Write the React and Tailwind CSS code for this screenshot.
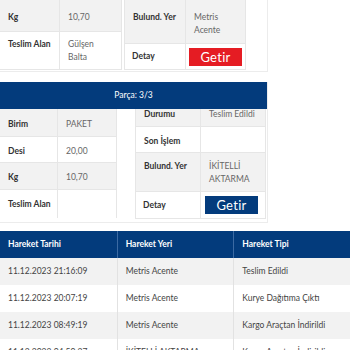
import React from 'react';

const navy = 'bg-[#033b7c]';

// one label/value row of a part detail table; cells sit at the top like td's
const Row = ({ label, children, gray, h, lw, vw, pt = 'pt-[8px]' }) => (
  <div className={`flex ${h} ${gray ? 'bg-[#f2f2f2]' : 'bg-white'} border-b border-[#e6e6e6] last:border-b-0`}>
    <div className={`${lw} shrink-0 ${pt} pl-[8px] pr-1 font-bold text-[#333] leading-[13px] border-r border-[#e6e6e6]`}>
      {label}
    </div>
    <div className={`${vw} shrink-0 ${pt} pl-[8px] pr-1 text-[#666] leading-[13px]`}>
      {children}
    </div>
  </div>
);

const Button = ({ color, children }) => (
  <div className={`w-[53px] h-[18px] ${color} text-white text-[13px] leading-[18px] text-center tracking-[0.3px]`}>
    {children}
  </div>
);

const moves = [
  ['11.12.2023 21:16:09', 'Metris Acente', 'Teslim Edildi'],
  ['11.12.2023 20:07:19', 'Metris Acente', 'Kurye Dağıtıma Çıktı'],
  ['11.12.2023 08:49:19', 'Metris Acente', 'Kargo Araçtan İndirildi'],
  ['11.12.2023 04:50:27', 'İKİTELLİ AKTARMA', 'Kargo Araçtan İndirildi'],
];

export default function App() {
  return (
    <div className="w-[350px] h-[350px] overflow-hidden bg-white text-[8.5px] font-['Lato','Noto_Sans',sans-serif]">
      {/* tail of the previous part card */}
      <div className="w-[268px] h-[72px] flex gap-[2px] border-b border-r border-[#ececec]">
        <div className="w-[122px] self-start border-r border-b border-[#e6e6e6]">
          <Row label="Kg" gray h="h-[32px]" lw="w-[60px]" vw="w-[62px]" pt="pt-[11px]">10,70</Row>
          <Row label="Teslim Alan" h="h-[37px]" lw="w-[60px]" vw="w-[62px]" pt="pt-[6px]">
            <span>Gülşen<br />Balta</span>
          </Row>
        </div>
        <div className="w-[122px] self-start border-x border-b border-[#e6e6e6]">
          <Row label="Bulund. Yer" gray h="h-[44px]" lw="w-[61px]" vw="w-[61px]" pt="pt-[11px]">
            <span>Metris<br />Acente</span>
          </Row>
          <div className="flex h-[25px] bg-white">
            <div className="w-[61px] flex items-center pl-[7px] font-bold text-[#333] border-r border-[#e6e6e6]">Detay</div>
            <div className="flex items-center pl-[3px]">
              <Button color="bg-[#e51c23]">Getir</Button>
            </div>
          </div>
        </div>
      </div>

      {/* part 3/3 */}
      <div className="w-[268px] mt-[10px] border-b border-r border-[#ececec] pb-[3px]">
        <div className={`relative z-10 h-[27px] ${navy} text-white flex items-center justify-center`}>
          Parça: 3/3
        </div>
        <div className="flex">
          <div className="w-[117px] self-start border-r border-[#e6e6e6]">
            <Row label="Birim" gray h="h-[28px]" lw="w-[58px]" vw="w-[59px]" pt="pt-[9px]">PAKET</Row>
            <Row label="Desi" h="h-[26px]" lw="w-[58px]" vw="w-[59px]">20,00</Row>
            <Row label="Kg" gray h="h-[27px]" lw="w-[58px]" vw="w-[59px]">10,70</Row>
            <Row label="Teslim Alan" h="h-[28px]" lw="w-[58px]" vw="w-[59px]"></Row>
          </div>
          <div className="w-[131px] ml-[18px] -mt-[9px] self-start border-x border-b border-[#e6e6e6]">
            <Row label="Durumu" gray h="h-[27px]" lw="w-[65px]" vw="w-[66px]">Teslim Edildi</Row>
            <Row label="Son İşlem" h="h-[26px]" lw="w-[65px]" vw="w-[66px]"></Row>
            <Row label="Bulund. Yer" gray h="h-[39px]" lw="w-[65px]" vw="w-[66px]" pt="pt-[7px]">
              <span>İKİTELLİ<br />AKTARMA</span>
            </Row>
            <div className="flex h-[26px] bg-white">
              <div className="w-[65px] flex items-center pl-[7px] font-bold text-[#333] border-r border-[#e6e6e6]">Detay</div>
              <div className="flex items-center pl-[4px]">
                <Button color={navy}>Getir</Button>
              </div>
            </div>
          </div>
        </div>
      </div>

      {/* movement history */}
      <div className="mt-[8px] w-[350px]">
        <div className={`grid grid-cols-3 h-[27px] ${navy} text-white font-bold`}>
          {['Hareket Tarihi', 'Hareket Yeri', 'Hareket Tipi'].map((t, i) => (
            <div key={t} className={`flex items-center pl-[8px] ${i > 0 ? 'border-l border-[#3c6aa3]' : ''}`}>{t}</div>
          ))}
        </div>
        {moves.map((m, r) => (
          <div key={r} className={`grid grid-cols-3 h-[27px] text-[#444] ${r % 2 === 0 ? 'bg-[#f2f2f2]' : 'bg-white'}`}>
            {m.map((c, i) => (
              <div key={i} className={`flex items-center pl-[8px] ${i > 0 ? 'border-l border-[#e2e2e2]' : ''}`}>{c}</div>
            ))}
          </div>
        ))}
      </div>
    </div>
  );
}
